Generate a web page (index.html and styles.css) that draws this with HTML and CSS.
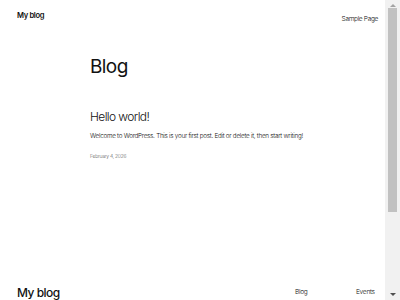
FILE: index.html
```html
<!DOCTYPE html>
<html lang="en">
<head>
    <meta charset="UTF-8">
    <meta name="viewport" content="width=device-width, initial-scale=1.0">
    <title>My blog</title>
    <link rel="stylesheet" href="styles.css">
</head>
<body>
    <header class="site-header">
        <a class="site-title" href="#">My blog</a>
        <nav class="site-nav">
            <a href="#">Sample Page</a>
        </nav>
    </header>

    <main class="content">
        <h1 class="page-title">Blog</h1>
        <article class="post">
            <h2 class="post-title">Hello world!</h2>
            <p class="post-excerpt">Welcome to WordPress. This is your first post. Edit or delete it, then start writing!</p>
            <div class="post-date">February 4, 2026</div>
        </article>
    </main>

    <footer class="site-footer">
        <div class="footer-inner">
            <a class="footer-title" href="#">My blog</a>
            <div class="footer-links">
                <ul>
                    <li><a href="#">Blog</a></li>
                    <li><a href="#">About</a></li>
                    <li><a href="#">FAQs</a></li>
                    <li><a href="#">Authors</a></li>
                </ul>
                <ul>
                    <li><a href="#">Events</a></li>
                    <li><a href="#">Shop</a></li>
                    <li><a href="#">Patterns</a></li>
                    <li><a href="#">Themes</a></li>
                </ul>
            </div>
        </div>
        <div class="footer-bottom">
            <span>Twenty Twenty-Five</span>
            <span>Designed with WordPress</span>
        </div>
    </footer>

    <!-- the browser's scrollbar, drawn -->
    <div class="scrollbar">
        <span class="arrow up"></span>
        <span class="thumb"></span>
        <span class="arrow down"></span>
    </div>
</body>
</html>
```

FILE: styles.css
```css
* {
    margin: 0;
    padding: 0;
    box-sizing: border-box;
}
body {
    font-family: Inter, "Noto Sans", sans-serif;
    color: #111;
    background: #fff;
    padding-right: 15px;
}
a {
    color: #111;
    text-decoration: none;
}
.site-header {
    display: flex;
    justify-content: space-between;
    align-items: center;
    padding: 8px 7px 0 17px;
    height: 22px;
}
.site-title {
    font-size: 7.6px;
    font-weight: 600;
    letter-spacing: -0.35px;
}
.site-nav a {
    font-size: 6.6px;
    font-weight: 300;
    letter-spacing: -0.35px;
}
.content {
    padding: 34px 20px 0 90px;
    min-height: 248px;
}
.page-title {
    font-size: 19px;
    font-weight: 400;
    line-height: 1.2;
    letter-spacing: -0.6px;
}
.post {
    margin-top: 31px;
}
.post-title {
    font-size: 12px;
    font-weight: 300;
    line-height: 1.2;
    letter-spacing: -0.6px;
}
.post-excerpt {
    margin-top: 8px;
    font-size: 6.3px;
    font-weight: 300;
    letter-spacing: -0.25px;
}
.post-date {
    margin-top: 13px;
    font-size: 5px;
    font-weight: 300;
    color: #666;
    letter-spacing: -0.25px;
}
.site-footer {
    padding: 16px 7px 30px 17px;
}
.footer-inner {
    display: flex;
    justify-content: space-between;
    align-items: flex-start;
}
.footer-title {
    font-size: 12px;
    font-weight: 500;
    letter-spacing: -0.5px;
    line-height: 1.2;
}
.footer-links {
    display: flex;
    gap: 39px;
    padding-top: 3px;
}
.footer-links ul {
    list-style: none;
    width: 22px;
    display: flex;
    flex-direction: column;
    gap: 8px;
    font-size: 6.6px;
    line-height: 1.2;
}
.footer-links a {
    font-weight: 300;
    letter-spacing: -0.3px;
    white-space: nowrap;
}
.footer-bottom {
    display: flex;
    justify-content: space-between;
    margin-top: 40px;
    font-size: 6px;
    font-weight: 300;
}
.scrollbar {
    position: fixed;
    top: 0;
    right: 0;
    width: 15px;
    height: 100vh;
    background: #f1f1f1;
    display: flex;
    flex-direction: column;
    align-items: center;
}
.arrow {
    width: 0;
    height: 0;
    border-left: 3px solid transparent;
    border-right: 3px solid transparent;
    margin: 4px 0;
}
.arrow.up {
    border-bottom: 3px solid #a3a3a3;
}
.arrow.down {
    margin-top: auto;
    border-top: 3px solid #505050;
}
.thumb {
    width: 9px;
    height: 204px;
    background: #c1c1c1;
    margin-top: -3px;
}
```
